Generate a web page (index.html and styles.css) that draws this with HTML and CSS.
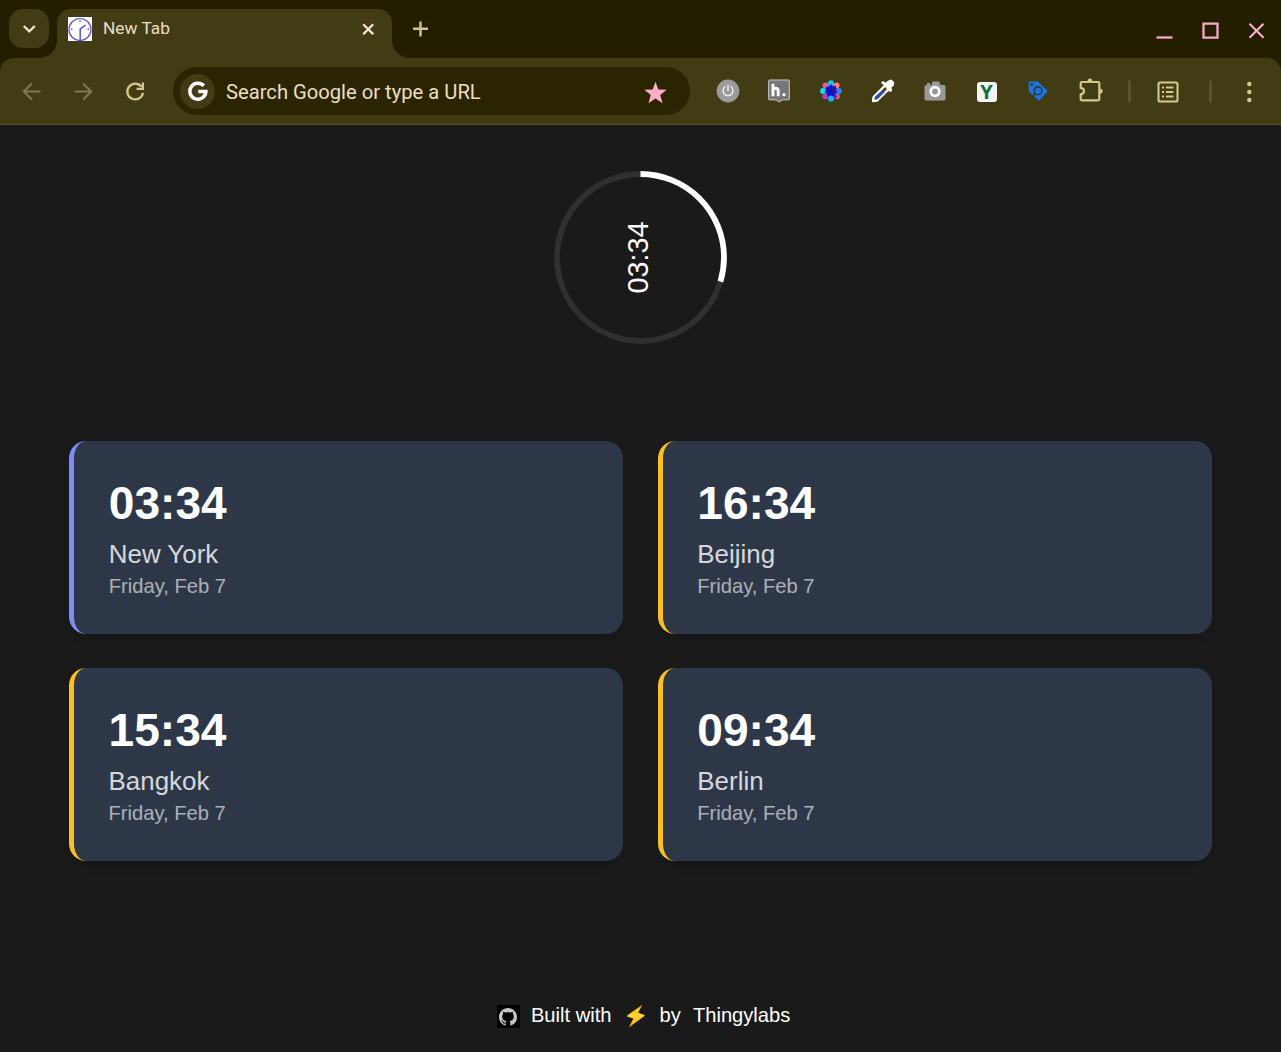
FILE: index.html
```html
<!DOCTYPE html>
<html lang="en">
<head>
<meta charset="utf-8">
<title>New Tab</title>
<link rel="stylesheet" href="styles.css">
</head>
<body>
<header class="browser">
  <div class="tabstrip">
    <button class="tab-search" aria-label="Search tabs"><svg width="16" height="16" viewBox="0 0 16 16"><path d="M2.800 5l5.500 5.300L13.800 5" fill="none" stroke="#f1e3cf" stroke-width="2.400"/></svg></button>
    <div class="tab">
      <svg class="favicon" width="24" height="24" viewBox="0 0 24 24"><path fill="#fff" d="M0 0h24v24H0z"/><g fill="none" stroke="#5950e6"><circle cx="12" cy="12.500" r="11" stroke-width="1.200"/><path d="M12.200 23V12l5.500-4" stroke-width="1.500"/><path d="M12 3v1.500M3 12.300h1.500M19.500 12.300H21" stroke-width="1.500"/></g></svg>
      <span class="tab-title">New Tab</span>
      <svg class="tab-close" width="12" height="12" viewBox="0 0 12 12"><path d="M1.200 1.200l10 10M11.200 1.200l-10 10" stroke="#f6e6d3" stroke-width="2.300"/></svg>
    </div>
    <svg class="new-tab" width="16" height="16" viewBox="0 0 16 16"><path d="M8.500 .5v15M1 7.700h15" stroke="#cfc58c" stroke-width="2.400"/></svg>
    <div class="window-controls">
      <svg width="18" height="18" viewBox="0 0 18 18"><path d="M.5 15.500h16" stroke="#ffb0cd" stroke-width="2.200"/></svg>
      <svg width="18" height="18" viewBox="0 0 18 18"><path d="M1.500 1.700h14v14h-14z" fill="none" stroke="#f5a9c6" stroke-width="2.300"/></svg>
      <svg width="18" height="18" viewBox="0 0 18 18"><path d="M1.500 1.700l14 14M15.500 1.700l-14 14" stroke="#ffb0cd" stroke-width="2"/></svg>
    </div>
  </div>
  <nav class="toolbar">
    <span class="cell"><svg width="20" height="20" viewBox="0 0 20 20"><path d="M18.500 9.500h-16M9.800 1.500l-8 8 8 8" fill="none" stroke="#80774e" stroke-width="2.100"/></svg></span>
    <span class="cell"><svg width="20" height="20" viewBox="0 0 20 20"><path d="M.5 9.500h16M9.200 1.500l8 8-8 8" fill="none" stroke="#80774e" stroke-width="2.100"/></svg></span>
    <span class="cell"><svg width="20" height="20" viewBox="0 0 20 20"><path d="M18 10.900A7.900 7.900 0 1 1 16.400 4.600" fill="none" stroke="#d2c88e" stroke-width="2.300"/><path d="M19 .6v7.500h-7.500V5.800h5.200V.6z" fill="#d2c88e"/></svg></span>
    <div class="omnibox">
      <span class="google"><svg width="20" height="20" viewBox="0 0 20 20"><path d="M15.800 4.800A8 8 0 1 0 17.900 10.400H10.300" fill="none" stroke="#fff" stroke-width="3.500"/></svg></span>
      <span class="query">Search Google or type a URL</span>
      <svg class="star" width="24" height="24" viewBox="0 0 24 24"><path fill="#ffadcb" d="M12.500 .8l2.800 7.800 8.400.2-6.500 5.200 2.400 8.200-7.100-4.700-7.100 4.700L7.800 14 1.300 8.800l8.400-.2z"/></svg>
    </div>
    <div class="extensions">
      <span class="cell"><svg width="24" height="24" viewBox="0 0 24 24"><circle cx="12" cy="12" r="11.400" fill="#9b9b9b"/><path d="M9.300 7.500a5 5 0 1 0 5.400 0M12 5.700V12" fill="none" stroke="#f5f5f5" stroke-width="1.300"/></svg></span>
      <span class="cell"><svg width="24" height="24" viewBox="0 0 24 24"><path d="M2.500 1h19q.8 0 .8.800V20q0 .8-.8.800h-6L12 23l-3-2.200H2.500q-.8 0-.8-.8V1.800q0-.8.800-.8z" fill="#777" stroke="#ccc"/><path d="M6 4.700v12.500M6 11c1-2.500 5.200-2.500 5.200 1v5.200" fill="none" stroke="#fff" stroke-width="2.900"/><circle cx="17" cy="15.700" r="1.600" fill="#fff"/></svg></span>
      <span class="cell"><svg width="22" height="22" viewBox="0 0 22 22"><circle cx="11" cy="11" r="7" fill="#1a2fd0"/><circle cx="11" cy="3.300" r="3" fill="#19c8f2"/><circle cx="16.600" cy="5.300" r="2.900" fill="#ff7f84"/><circle cx="18.900" cy="11" r="2.900" fill="#3884ff"/><circle cx="17" cy="16.500" r="2.700" fill="#ed765d"/><circle cx="15.300" cy="16.500" r="2.200" fill="#8f18e4"/><circle cx="11" cy="18.700" r="2.900" fill="#18b4f7"/><circle cx="5.300" cy="16.500" r="2.800" fill="#c53bc7"/><circle cx="3" cy="11" r="2.900" fill="#10dff5"/><circle cx="5.400" cy="5.400" r="2.800" fill="#e6609a"/><path d="M11 3.500l1.700 4.500 3.800-1.500-1.800 3.500 3.300 1.500-4 1.200 1 4-4-2.200-4 2.200 1-4-4-1.200 3.300-1.500L5.500 6.500l3.800 1.500z" fill="#0710c4"/><path d="M10.500 8l5.500-2.500L15 12l-3 1z" fill="#31128b"/></svg></span>
      <span class="cell"><svg width="24" height="24" viewBox="0 0 24 24"><path d="M2 22l.6-4L14.300 6.300l3.600 3.600L6.200 21.500z" fill="#423c14" stroke="#fff" stroke-width="2.300" stroke-linejoin="round"/><path d="M3.900 20.200l.3-2.600 7.200-5.800 2.600 1.200-7.500 7.200z" fill="#304bc5"/><path d="M10 3.500q2-2.300 3.700-.5l1.300.7 2-2.300 3-1 3.300 2.600-.5 3.500-2.500 2.300 1 2.200q-.5 2-2.500 2z" fill="#fff"/></svg></span>
      <span class="cell"><svg width="22" height="22" viewBox="0 0 22 22"><path d="M2 5h1V3h3v2h1.500l1-3.500h6.500L16.500 5H20q1.500 0 1.500 1.500v12.300q0 1.700-1.500 1.700H2Q.5 20.500.5 18.800V6.500Q.5 5 2 5z" fill="#999"/><circle cx="11" cy="11.500" r="4.300" fill="#999" stroke="#fff" stroke-width="2.700"/></svg></span>
      <span class="cell"><span class="y-badge">Y</span></span>
      <span class="cell"><svg width="22" height="22" viewBox="0 0 22 22"><path d="M2.500 1.500l8-.3L19.800 10.300q1 1 0 2L13 19.700q-1.200 1-2.400 0L1.800 11.300l-.2-9z" fill="#1a73e8"/><circle cx="4.800" cy="4.700" r="1.400" fill="#323818"/><circle cx="11" cy="10.700" r="3.900" fill="none" stroke="#323818" stroke-width="1.400"/><path d="M8.300 13.400l-2 2" stroke="#323818" stroke-width="1.400"/></svg></span>
      <span class="cell"><svg width="26" height="26" viewBox="0 0 26 26"><path d="M5 4h16q1.300 0 1.300 1.300V21q0 1.300-1.300 1.300H5q-1.300 0-1.300-1.300v-4.700q3.300-.4 3.300-3.300T3.700 9.800V5.300Q3.700 4 5 4z" fill="none" stroke="#d2c88e" stroke-width="2.200"/><path d="M10.500 4a2.500 3.500 0 0 1 5 0zM22.300 10.400a3.400 2.700 0 0 1 0 5.400z" fill="#d2c88e"/></svg></span>
    </div>
    <span class="divider first"></span>
    <span class="cell wide"><svg width="22" height="22" viewBox="0 0 22 22"><rect x="1.500" y="1.500" width="19" height="19" rx="1.500" fill="none" stroke="#d2c88e" stroke-width="2.100"/><path d="M5 6.500h2.200M5 11h2.200M5 15.500h2.200M9 6.500h7.500M9 11h7.500M9 15.500h7.500" stroke="#d2c88e" stroke-width="2.100"/></svg></span>
    <span class="divider second"></span>
    <span class="cell menu"><svg width="6" height="22" viewBox="0 0 6 22"><g fill="#d2c88e"><circle cx="3.300" cy="3" r="2.200"/><circle cx="3.300" cy="11" r="2.200"/><circle cx="3.300" cy="19" r="2.200"/></g></svg></span>
  </nav>
</header>
<main class="page">
  <svg class="dial" width="173" height="173" viewBox="0 0 173 173">
    <circle cx="86.500" cy="86.500" r="83.500" fill="none" stroke="#303030" stroke-width="5.760"/>
    <circle cx="86.500" cy="86.500" r="83.500" fill="none" stroke="#fff" stroke-width="5.760" pathLength="1000" stroke-dasharray="297 1000" transform="rotate(-90 86.500 86.500)"/>
    <text class="dial-time" x="86.500" y="86.500" text-anchor="middle" transform="rotate(-90 86.500 86.500) translate(0 7.500)">03:34</text>
  </svg>
  <section class="cities">
    <article class="card local"><div class="time">03:34</div><div class="city">New York</div><div class="date">Friday, Feb 7</div></article>
    <article class="card"><div class="time">16:34</div><div class="city">Beijing</div><div class="date">Friday, Feb 7</div></article>
    <article class="card"><div class="time">15:34</div><div class="city">Bangkok</div><div class="date">Friday, Feb 7</div></article>
    <article class="card"><div class="time">09:34</div><div class="city">Berlin</div><div class="date">Friday, Feb 7</div></article>
  </section>
  <footer class="credits">
    <span class="github"><svg width="18" height="18" viewBox="0 0 16 16"><path fill="#c4c4c4" d="M8 0C3.580 0 0 3.580 0 8c0 3.540 2.290 6.530 5.470 7.590.4.070.55-.17.55-.38 0-.19-.01-.82-.01-1.490-2.010.37-2.530-.49-2.690-.94-.09-.23-.48-.94-.82-1.130-.28-.15-.68-.52-.01-.53.63-.01 1.080.58 1.230.82.72 1.210 1.870.87 2.330.66.070-.52.280-.87.510-1.070-1.780-.2-3.640-.89-3.640-3.950 0-.87.310-1.590.82-2.150-.08-.2-.36-1.020.08-2.120 0 0 .67-.21 2.200.82.640-.18 1.320-.27 2-.27s1.360.09 2 .27c1.530-1.040 2.200-.82 2.200-.82.440 1.100.16 1.920.08 2.120.51.560.82 1.270.82 2.150 0 3.070-1.870 3.750-3.650 3.950.29.250.54.730.54 1.480 0 1.070-.01 1.930-.01 2.200 0 .21.15.46.55.38A8.010 8.010 0 0 0 16 8c0-4.420-3.580-8-8-8z"/></svg></span>
    <span class="built">Built with</span>
    <svg class="bolt" width="22" height="24" viewBox="0 0 22 24"><defs><linearGradient id="bolt" x1="0" y1="0" x2="0" y2="1"><stop offset="0" stop-color="#f9a81e"/><stop offset=".45" stop-color="#ffd82e"/><stop offset="1" stop-color="#f5a21b"/></linearGradient></defs><path d="M17.300.8L2.500 11.200q-1 1 .2 1.500l5.700 1.800L3.800 23.600 19.200 12.200q1-.9-.2-1.500l-5.800-2z" fill="url(#bolt)"/></svg>
    <span class="by">by</span>
    <span>Thingylabs</span>
  </footer>
</main>
</body>
</html>
```

FILE: styles.css
```css
* { box-sizing: border-box; }
body {
  margin: 0;
  height: 1052px;
  display: flex;
  flex-direction: column;
  background: #1a1a1a;
  color: #fff;
  font-family: "Liberation Sans", Arial, sans-serif;
  overflow: hidden;
}
svg { display: block; flex: none; }
.browser { flex: none; background: #231e00; font-family: Roboto, sans-serif; }
.tabstrip { display: flex; height: 58px; padding: 9px 15px 0 9px; }
.tab-search {
  display: grid;
  place-items: center;
  width: 40px;
  height: 39px;
  padding: 0;
  border: 0;
  border-radius: 14px;
  background: #423c14;
}
.tab {
  position: relative;
  display: flex;
  align-items: center;
  width: 335px;
  height: 49px;
  margin-left: 8px;
  padding: 0 18px 10px 11px;
  border-radius: 14px 14px 0 0;
  background: #423c14;
}
.tab::before, .tab::after {
  content: "";
  position: absolute;
  bottom: 0;
  width: 17px;
  height: 17px;
}
.tab::before { right: 100%; background: radial-gradient(circle at 0 0, transparent 16.500px, #423c14 17px); }
.tab::after { left: 100%; background: radial-gradient(circle at 100% 0, transparent 16.500px, #423c14 17px); }
.tab-title { margin-left: 11px; padding-bottom: 2px; color: #ecdfc5; font-size: 17.300px; line-height: 24px; }
.tab-close { margin-left: auto; }
.new-tab { margin: 12px 0 0 20px; }
.window-controls { display: flex; gap: 28px; margin: 13px 0 0 auto; }
.toolbar {
  display: flex;
  align-items: center;
  height: 67px;
  padding-left: 6px;
  border-bottom: 1px solid #57502b;
  border-radius: 14px 14px 0 0;
  background: #423c14;
}
.cell { display: grid; place-items: center; flex: none; width: 51.800px; height: 48px; padding-top: 1px; }
.omnibox {
  display: flex;
  align-items: center;
  width: 517px;
  height: 48px;
  margin-left: 11.600px;
  padding: 0 23px 0 7px;
  border-radius: 24px;
  background: #2a2500;
}
.google { display: grid; place-items: center; width: 35px; height: 35px; padding-left: 1px; border-radius: 50%; background: #423c14; }
.query { margin-left: 11px; padding-top: 2px; color: #ecdfc5; font-size: 20.200px; line-height: 28px; white-space: nowrap; }
.star { margin: 3px 0 0 auto; }
.extensions { display: flex; margin-left: 11.700px; }
.extensions .cell { padding-top: 0; }
.y-badge {
  width: 20px;
  height: 20px;
  margin-top: 1px;
  border-radius: 3px;
  background: #f4f4f4;
  color: #087238;
  font: 700 20px/20px "Open Sans", sans-serif;
  text-align: center;
}
.divider { flex: none; width: 3px; height: 23px; border-radius: 2px; background: #5b542a; }
.divider.first { margin: 0 12.500px 0 11.900px; }
.divider.second { margin: 0 15.500px; }
.cell.wide { width: 50px; }
.cell.menu { width: 44px; }
.page { flex: 1; display: flex; flex-direction: column; align-items: center; padding-top: 46px; }
.dial-time { fill: #fff; font-size: 28.800px; }
.cities {
  display: grid;
  grid-template-columns: 1fr 1fr;
  gap: 34.560px;
  width: 1143px;
  margin-top: 97px;
}
.card {
  height: 192.600px;
  padding: 34.560px;
  border-left: 5px solid #fbbf24;
  border-radius: 17.280px;
  background: #2d3748;
  box-shadow: 0 6px 9px rgba(0, 0, 0, .1);
}
.card.local { padding-left: 34.800px; border-left-color: #818cf8; }
.time { font-size: 46.080px; font-weight: 700; line-height: 55.300px; }
.city { margin-top: 5.400px; font-size: 25.920px; line-height: 37px; opacity: .8; }
.date { font-size: 20.160px; line-height: 26.900px; opacity: .6; }
.credits { display: flex; align-items: center; height: 24px; margin-top: 143px; padding-left: 6px; font-size: 20.160px; }
.github { display: grid; place-items: center; width: 23px; height: 23px; margin-top: 1px; padding-top: 1px; background: #000; }
.built { margin-left: 11.300px; }
.bolt { margin-left: 13px; }
.by { margin: 0 12px 0 13px; }
```
